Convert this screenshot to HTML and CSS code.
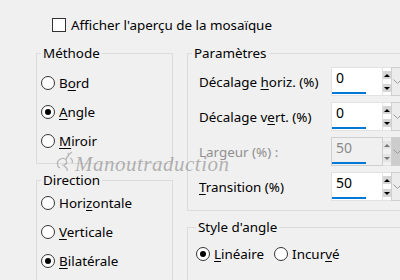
FILE: index.html
```html
<!DOCTYPE html>
<html lang="fr">
<head>
  <meta charset="UTF-8" />
  <title>Mosaïque - Paramètres</title>
  <link rel="stylesheet" href="styles.css">
</head>
<body>

<div class="dialog">
  <label class="check-row"><span class="checkbox"></span>Afficher l'aperçu de la mosaïque</label>

  <div class="columns">
    <div class="col-left">
      <fieldset class="group method">
        <legend>Méthode</legend>
        <div class="radio-row"><span class="radio"></span><span>B<u>o</u>rd</span></div>
        <div class="radio-row"><span class="radio checked"></span><span><u>A</u>ngle</span></div>
        <div class="radio-row"><span class="radio"></span><span><u>M</u>iroir</span></div>
      </fieldset>

      <fieldset class="group direction">
        <legend>Direction</legend>
        <div class="radio-row"><span class="radio"></span><span>Hori<u>z</u>ontale</span></div>
        <div class="radio-row"><span class="radio"></span><span><u>V</u>erticale</span></div>
        <div class="radio-row"><span class="radio checked"></span><span><u>B</u>ilatérale</span></div>
      </fieldset>
    </div>

    <div class="col-right">
      <fieldset class="group params">
        <legend>Paramètres</legend>

        <div class="param-row">
          <span class="param-label">Décalage <u>h</u>oriz. (%)</span>
          <div class="spin">
            <div class="spin-field"><span class="spin-value">0</span><span class="spin-bar"></span></div>
            <div class="spin-arrows"><span class="arrow up"></span><span class="arrow down"></span></div>
            <div class="spin-drop"><svg width="9" height="6" viewBox="0 0 9 6"><polyline points="0.5,0.5 4.5,4.5 8.5,0.5" /></svg></div>
          </div>
        </div>

        <div class="param-row">
          <span class="param-label">Décalage v<u>e</u>rt. (%)</span>
          <div class="spin">
            <div class="spin-field"><span class="spin-value">0</span><span class="spin-bar"></span></div>
            <div class="spin-arrows"><span class="arrow up"></span><span class="arrow down"></span></div>
            <div class="spin-drop"><svg width="9" height="6" viewBox="0 0 9 6"><polyline points="0.5,0.5 4.5,4.5 8.5,0.5" /></svg></div>
          </div>
        </div>

        <div class="param-row disabled">
          <span class="param-label">Largeur (%) :</span>
          <div class="spin">
            <div class="spin-field"><span class="spin-value">50</span><span class="spin-bar"></span></div>
            <div class="spin-arrows"><span class="arrow up"></span><span class="arrow down"></span></div>
            <div class="spin-drop"><svg width="9" height="6" viewBox="0 0 9 6"><polyline points="0.5,0.5 4.5,4.5 8.5,0.5" /></svg></div>
          </div>
        </div>

        <div class="param-row">
          <span class="param-label"><u>T</u>ransition (%)</span>
          <div class="spin">
            <div class="spin-field"><span class="spin-value">50</span><span class="spin-bar"></span></div>
            <div class="spin-arrows"><span class="arrow up"></span><span class="arrow down"></span></div>
            <div class="spin-drop"><svg width="9" height="6" viewBox="0 0 9 6"><polyline points="0.5,0.5 4.5,4.5 8.5,0.5" /></svg></div>
          </div>
        </div>
      </fieldset>

      <fieldset class="group angle-style">
        <legend>Style d'angle</legend>
        <div class="inline-radios">
          <div class="radio-row"><span class="radio checked"></span><span><u>L</u>inéaire</span></div>
          <div class="radio-row"><span class="radio"></span><span>Incur<u>v</u>é</span></div>
        </div>
      </fieldset>
    </div>
  </div>

  <!-- watermark over the dialog -->
  <div class="watermark">
    <svg width="20" height="22" viewBox="0 0 20 22">
      <path d="M2 13c2-5 7-6 9-3s-1 6-4 5M11 10c1-4 3-6 6-8M13 3c1 2 0 4-2 5M9 16c2 1 4 3 3 5M5 18c-2-1-3-3-2-5M15 8c2 1 3 3 2 5" />
    </svg>
    <span>Manoutraduction</span>
  </div>
</div>

</body>
</html>
```

FILE: styles.css
```css
* {
  box-sizing: border-box;
}

body {
  margin: 0;
  background: #f0f0f0;
  color: #000;
  font-family: 'Noto Sans', 'Open Sans', sans-serif;
  font-size: 13.4px;
  width: 400px;
  height: 280px;
  overflow: hidden;
}

.dialog {
  position: relative;
  padding-top: 17px;
}

u {
  text-decoration-thickness: 1px;
  text-underline-offset: 2px;
}

.check-row {
  display: flex;
  align-items: center;
  gap: 5px;
  margin-left: 52px;
  height: 16px;
  line-height: 16px;
}

.checkbox {
  width: 14px;
  height: 14px;
  border: 1px solid #333;
  background: #fff;
}

.columns {
  display: flex;
  gap: 14px;
  margin-top: 12px;
  margin-left: 36px;
}

.col-left {
  width: 137px;
  flex: none;
}

.col-right {
  width: 240px;
  flex: none;
}

.group {
  margin: 0;
  border: 1px solid #dcdcdc;
  padding: 0 4px;
  min-width: 0;
}

.group legend {
  padding: 0 2px;
  line-height: 16px;
}

.method {
  padding-top: 7px;
  padding-bottom: 8px;
}

.direction {
  margin-top: 8px;
  padding-bottom: 20px;
}

.radio-row {
  display: flex;
  align-items: center;
  gap: 4px;
  height: 29px;
}

.radio {
  width: 14px;
  height: 14px;
  border-radius: 50%;
  border: 1px solid #333;
  background: #fff;
  display: flex;
  align-items: center;
  justify-content: center;
}

.radio.checked::after {
  content: "";
  width: 6px;
  height: 6px;
  border-radius: 50%;
  background: #000;
}

.params {
  padding: 6px 0 9px 4px;
}

.param-row {
  display: flex;
  align-items: center;
  height: 29px;
  padding-left: 7px;
  margin-bottom: 6px;
}

.param-row:last-child {
  margin-bottom: 0;
}

.param-label {
  width: 132px;
  flex: none;
}

.spin {
  display: flex;
  height: 29px;
  flex: none;
}

.spin-field {
  width: 52px;
  background: #fff;
  border: 1px solid #e2e2e2;
  display: flex;
  flex-direction: column;
  padding-left: 4px;
  font-size: 14px;
}

.spin-value {
  line-height: 18px;
  padding-top: 1px;
}

.spin-bar {
  margin-top: auto;
  margin-left: -4px;
  width: 34px;
  height: 2px;
  background: #0078d7;
  margin-bottom: 1px;
}

.spin-arrows {
  width: 8px;
  display: flex;
  flex-direction: column;
  justify-content: space-between;
  padding: 3px 0;
  background: #fff;
  border-top: 1px solid #e2e2e2;
  border-bottom: 1px solid #e2e2e2;
}

.arrow {
  height: 8px;
  background: #d6d6d6;
  display: flex;
  align-items: center;
  justify-content: center;
}

.arrow::after {
  content: "";
  border-left: 3px solid transparent;
  border-right: 3px solid transparent;
}

.arrow.up::after {
  border-bottom: 3px solid #000;
}

.arrow.down::after {
  border-top: 3px solid #000;
}

.spin-drop {
  width: 12px;
  background: #ececec;
  border: 1px solid #cfcfcf;
  display: flex;
  align-items: center;
  justify-content: center;
}

.spin-drop polyline {
  fill: none;
  stroke: #9a9a9a;
  stroke-width: 1;
}

.disabled .param-label {
  color: #8f8f8f;
}

.disabled .spin-field {
  background: #f0f0f0;
  border-color: #cfcfcf;
  color: #8a8a8a;
}

.disabled .spin-arrows {
  background: #f0f0f0;
}

.disabled .arrow {
  background: #e4e4e4;
}

.disabled .arrow.up::after {
  border-bottom-color: #777;
}

.disabled .arrow.down::after {
  border-top-color: #777;
}

.disabled .spin-drop {
  background: #cccccc;
}

.angle-style {
  margin-top: 8px;
  padding: 4px 4px 30px 8px;
}

.inline-radios {
  display: flex;
  gap: 10px;
}

.watermark {
  position: absolute;
  left: 55px;
  top: 150px;
  display: flex;
  align-items: flex-end;
  color: rgba(110, 110, 110, 0.5);
  font-family: 'Liberation Serif', serif;
  font-style: italic;
  font-size: 21px;
  letter-spacing: 0.5px;
  line-height: 24px;
  pointer-events: none;
}

.watermark svg {
  margin-bottom: 4px;
}

.watermark svg path {
  fill: none;
  stroke: rgba(110, 110, 110, 0.45);
  stroke-width: 1.2;
}
```
